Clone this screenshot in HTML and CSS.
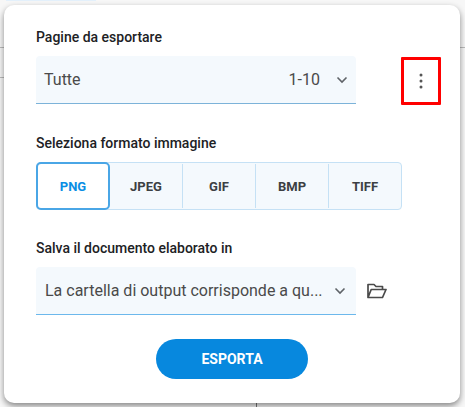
FILE: index.html
```html
<!DOCTYPE html>
<html>
<head>
    <title>Esporta</title>
    <link rel="stylesheet" href="styles.css">
</head>
<body>
    <div class="backdrop">
        <div class="top-tab"></div>
        <div class="line-left"></div>
        <div class="line-left-low"></div>
        <div class="line-right"></div>
        <div class="line-bottom"></div>
    </div>
    <div class="dialog">
        <div class="field-label">Pagine da esportare</div>
        <div class="row">
            <div class="select">
                <span class="select-text">Tutte</span>
                <span class="select-range">1-10</span>
                <svg class="chevron" width="12" height="8" viewBox="0 0 12 8"><path d="M1.5 1.5 6 6l4.5-4.500" fill="none" stroke="#5f6368" stroke-width="1.6"/></svg>
            </div>
            <div class="more-box">
                <svg width="4" height="16" viewBox="0 0 4 16"><circle cx="2" cy="2" r="1.5" fill="#555"/><circle cx="2" cy="8" r="1.5" fill="#555"/><circle cx="2" cy="14" r="1.5" fill="#555"/></svg>
            </div>
        </div>

        <div class="field-label format-label">Seleziona formato immagine</div>
        <div class="formats">
            <div class="format active">PNG</div>
            <div class="format">JPEG</div>
            <div class="format">GIF</div>
            <div class="format">BMP</div>
            <div class="format">TIFF</div>
        </div>

        <div class="field-label output-label">Salva il documento elaborato in</div>
        <div class="row">
            <div class="select output">
                <span class="select-text">La cartella di output corrisponde a qu...</span>
                <svg class="chevron" width="12" height="8" viewBox="0 0 12 8"><path d="M1.5 1.5 6 6l4.5-4.500" fill="none" stroke="#5f6368" stroke-width="1.6"/></svg>
            </div>
            <svg class="folder" width="20" height="16" viewBox="0 0 20 16"><path d="M1 14.500V1.500h6l2 2h6.500v3M1 14.500h14.500L19 6.500H4.200L1 14.500z" fill="none" stroke="#4a4a4a" stroke-width="1.7" stroke-linejoin="round"/></svg>
        </div>

        <div class="actions">
            <button class="export-btn">ESPORTA</button>
        </div>
    </div>
</body>
</html>
```

FILE: styles.css
```css
html, body {
    margin: 0;
    height: 100%;
}

body {
    font-family: Roboto, "Liberation Sans", sans-serif;
    background-color: #f7f7f7;
    overflow: hidden;
    position: relative;
    width: 465px;
    height: 407px;
}

.backdrop div {
    position: absolute;
}

.top-tab {
    left: 6px;
    top: 0;
    width: 90px;
    height: 1px;
    background-color: #e3f0fb;
}

.line-left,
.line-left-low {
    left: 0;
    width: 4px;
    height: 1px;
    background-color: #bbb;
}

.line-left {
    top: 47px;
}

.line-left-low {
    top: 77px;
}

.line-right {
    left: 460px;
    top: 47px;
    width: 5px;
    height: 1px;
    background-color: #bbb;
}

.line-bottom {
    left: 256px;
    top: 403px;
    width: 1px;
    height: 4px;
    background-color: #777;
}

.dialog {
    position: absolute;
    left: 4px;
    top: 5px;
    width: 456px;
    height: 398px;
    box-sizing: border-box;
    padding: 22px 0 0 32px;
    background-color: #fff;
    border-radius: 10px;
    box-shadow: 0 3px 6px rgba(0, 0, 0, 0.45);
}

.field-label {
    font-size: 14px;
    font-weight: 500;
    line-height: 20px;
    color: #202124;
}

.row {
    display: flex;
    align-items: center;
    margin-top: 9px;
}

.select {
    display: flex;
    align-items: center;
    flex: 0 0 320px;
    box-sizing: border-box;
    height: 48px;
    padding: 0 8px 0 8px;
    background-color: #f4f9fd;
    border-bottom: 1px solid #7cb3d9;
    border-radius: 4px 4px 0 0;
    font-size: 16px;
    color: #4a4a4a;
}

.select-text {
    flex: 1;
    white-space: nowrap;
}

.select-range {
    margin-right: 16px;
}

.more-box {
    display: flex;
    align-items: center;
    justify-content: center;
    flex: 0 0 40px;
    box-sizing: border-box;
    height: 48px;
    margin: 1px 0 -1px 45px;
    border: 3px solid #f00;
    border-radius: 1px;
}

.format-label {
    margin-top: 29px;
}

.formats {
    display: flex;
    box-sizing: border-box;
    width: 366px;
    height: 48px;
    margin-top: 9px;
    background-color: #f4f9fd;
    border: 1px solid #c5e1f5;
    border-radius: 4px;
}

.format {
    flex: 1;
    display: flex;
    align-items: center;
    justify-content: center;
    font-size: 13px;
    font-weight: 700;
    color: #3c4043;
    border-left: 1px solid #c5e1f5;
    margin: 1px 0;
}

.format:first-child {
    border-left: none;
}

.format.active {
    margin: -1px 0 -1px -1px;
    flex: 0 0 74px;
    box-sizing: border-box;
    background-color: #fff;
    color: #0a8ee4;
    border: 2px solid #4aa6e6;
    border-radius: 5px;
}

.format.active + .format {
    border-left: none;
}

.output-label {
    margin-top: 28px;
}

.output {
    border-bottom-color: #6cb8ec;
    padding: 0 10px 0 9px;
}

.folder {
    margin-left: 11px;
}

.actions {
    display: flex;
    justify-content: center;
    margin-top: 24px;
    width: 392px;
}

.export-btn {
    width: 152px;
    height: 40px;
    border: none;
    border-radius: 20px;
    background-color: #0788de;
    color: #fff;
    font-family: inherit;
    font-size: 14px;
    font-weight: 700;
}
```
